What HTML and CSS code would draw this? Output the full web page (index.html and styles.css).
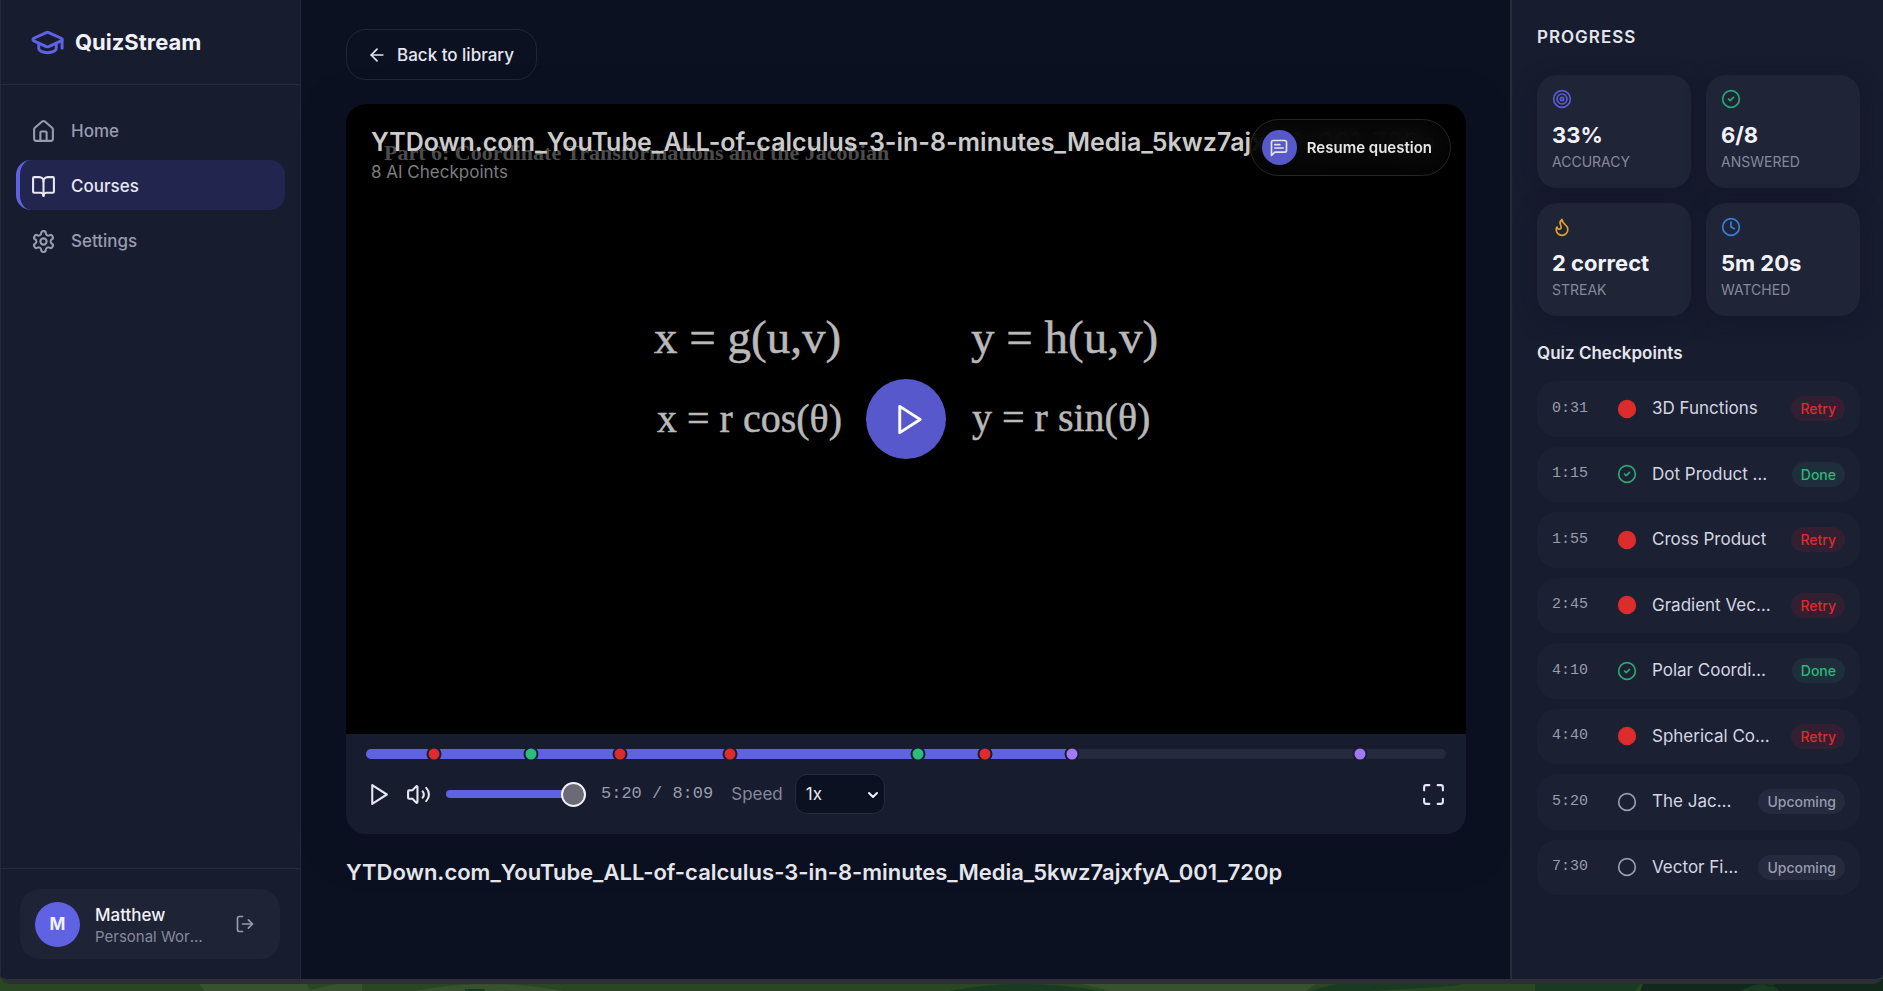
FILE: index.html
```html
<!DOCTYPE html>
<html lang="en">
<head>
  <meta charset="UTF-8">
  <meta name="viewport" content="width=device-width, initial-scale=1.0">
  <title>QuizStream</title>
  <link rel="stylesheet" href="styles.css">
</head>
<body>

  <div class="app">

    <!-- Sidebar -->
    <aside class="sidebar">
      <div class="brand">
        <svg class="icon icon-logo" viewBox="0 0 24 24"><path d="M21.42 10.922a1 1 0 0 0-.019-1.838L12.83 5.18a2 2 0 0 0-1.66 0L2.6 9.08a1 1 0 0 0 0 1.832l8.57 3.908a2 2 0 0 0 1.66 0z"/><path d="M22 10v6"/><path d="M6 12.5V16a6 3 0 0 0 12 0v-3.5"/></svg>
        <span class="brand-name">QuizStream</span>
      </div>

      <nav class="nav">
        <a class="nav-item" href="#home">
          <svg class="icon icon-nav" viewBox="0 0 24 24"><path d="M15 21v-8a1 1 0 0 0-1-1h-4a1 1 0 0 0-1 1v8"/><path d="M3 10a2 2 0 0 1 .709-1.528l7-5.999a2 2 0 0 1 2.582 0l7 5.999A2 2 0 0 1 21 10v9a2 2 0 0 1-2 2H5a2 2 0 0 1-2-2z"/></svg>
          Home
        </a>
        <a class="nav-item active" href="#courses">
          <svg class="icon icon-nav" viewBox="0 0 24 24"><path d="M12 7v14"/><path d="M3 18a1 1 0 0 1-1-1V4a1 1 0 0 1 1-1h5a4 4 0 0 1 4 4 4 4 0 0 1 4-4h5a1 1 0 0 1 1 1v13a1 1 0 0 1-1 1h-6a3 3 0 0 0-3 3 3 3 0 0 0-3-3z"/></svg>
          Courses
        </a>
        <a class="nav-item" href="#settings">
          <svg class="icon icon-nav" viewBox="0 0 24 24"><path d="M12.22 2h-.44a2 2 0 0 0-2 2v.18a2 2 0 0 1-1 1.73l-.43.25a2 2 0 0 1-2 0l-.15-.08a2 2 0 0 0-2.73.73l-.22.38a2 2 0 0 0 .73 2.73l.15.1a2 2 0 0 1 1 1.72v.51a2 2 0 0 1-1 1.74l-.15.09a2 2 0 0 0-.73 2.73l.22.38a2 2 0 0 0 2.73.73l.15-.08a2 2 0 0 1 2 0l.43.25a2 2 0 0 1 1 1.73V20a2 2 0 0 0 2 2h.44a2 2 0 0 0 2-2v-.18a2 2 0 0 1 1-1.73l.43-.25a2 2 0 0 1 2 0l.15.08a2 2 0 0 0 2.73-.73l.22-.39a2 2 0 0 0-.73-2.73l-.15-.08a2 2 0 0 1-1-1.74v-.5a2 2 0 0 1 1-1.74l.15-.09a2 2 0 0 0 .73-2.73l-.22-.38a2 2 0 0 0-2.73-.73l-.15.08a2 2 0 0 1-2 0l-.43-.25a2 2 0 0 1-1-1.73V4a2 2 0 0 0-2-2z"/><circle cx="12" cy="12" r="3"/></svg>
          Settings
        </a>
      </nav>

      <div class="sidebar-footer">
        <div class="user-card">
          <div class="avatar">M</div>
          <div class="user-info">
            <div class="user-name">Matthew</div>
            <div class="user-space">Personal Workspace</div>
          </div>
          <button class="icon-btn logout" type="button" aria-label="Log out">
            <svg class="icon icon-sm" viewBox="0 0 24 24"><path d="M9 21H5a2 2 0 0 1-2-2V5a2 2 0 0 1 2-2h4"/><path d="m16 17 5-5-5-5"/><path d="M21 12H9"/></svg>
          </button>
        </div>
      </div>
    </aside>

    <!-- Lesson -->
    <main class="main">
      <a class="back-btn" href="#library">
        <svg class="icon icon-sm" viewBox="0 0 24 24"><path d="m12 19-7-7 7-7"/><path d="M19 12H5"/></svg>
        Back to library
      </a>

      <section class="player">
        <div class="video">
          <svg class="frame" viewBox="0 0 1120 630">
            <text class="frame-heading" x="38" y="56">Part 6: Coordinate Transformations and the Jacobian</text>
            <text class="frame-big" x="308" y="249">x = g(u,v)</text>
            <text class="frame-big" x="625" y="249">y = h(u,v)</text>
            <text class="frame-small" x="311" y="328">x = r cos(θ)</text>
            <text class="frame-small" x="626" y="327">y = r sin(θ)</text>
          </svg>
          <div class="video-info">
            <div class="video-title">YTDown.com_YouTube_ALL-of-calculus-3-in-8-minutes_Media_5kwz7ajxfyA_001_720p</div>
            <div class="video-sub">8 AI Checkpoints</div>
          </div>
          <button class="resume-btn" type="button">
            <span class="resume-icon">
              <svg class="icon icon-sm" viewBox="0 0 24 24"><path d="M21 15a2 2 0 0 1-2 2H7l-4 4V5a2 2 0 0 1 2-2h14a2 2 0 0 1 2 2z"/><path d="M13 8H7"/><path d="M17 12H7"/></svg>
            </span>
            Resume question
          </button>
          <button class="big-play" type="button" aria-label="Play video">
            <svg class="icon icon-big" viewBox="0 0 24 24"><path d="M6 3l14 9-14 9z"/></svg>
          </button>
        </div>

        <div class="controls">
          <div class="timeline">
            <div class="timeline-fill" style="width: 65.4%"></div>
            <span class="marker retry" style="left: 6.3%"></span>
            <span class="marker done" style="left: 15.3%"></span>
            <span class="marker retry" style="left: 23.5%"></span>
            <span class="marker retry" style="left: 33.7%"></span>
            <span class="marker done" style="left: 51.1%"></span>
            <span class="marker retry" style="left: 57.3%"></span>
            <span class="marker upcoming" style="left: 65.4%"></span>
            <span class="marker upcoming" style="left: 92%"></span>
          </div>
          <div class="control-row">
            <button class="icon-btn" type="button" aria-label="Play">
              <svg class="icon icon-nav" viewBox="0 0 24 24"><path d="M6 3l14 9-14 9z"/></svg>
            </button>
            <button class="icon-btn" type="button" aria-label="Mute">
              <svg class="icon icon-nav" viewBox="0 0 24 24"><path d="M11 4.702a.705.705 0 0 0-1.203-.498L6.413 7.587A1.4 1.4 0 0 1 5.416 8H3a1 1 0 0 0-1 1v6a1 1 0 0 0 1 1h2.416a1.4 1.4 0 0 1 .997.413l3.383 3.384A.705.705 0 0 0 11 19.298z"/><path d="M16 9a5 5 0 0 1 0 6"/><path d="M19.364 18.364a9 9 0 0 0 0-12.728"/></svg>
            </button>
            <input class="volume" type="range" min="0" max="100" value="100" aria-label="Volume">
            <span class="time">5:20 / 8:09</span>
            <label class="speed-label" for="speed">Speed</label>
            <div class="speed-wrap">
              <select class="speed" id="speed">
                <option>0.5x</option>
                <option selected>1x</option>
                <option>1.5x</option>
                <option>2x</option>
              </select>
              <svg class="icon chevron" viewBox="0 0 24 24"><path d="m4 8 8 8 8-8"/></svg>
            </div>
            <button class="icon-btn fullscreen" type="button" aria-label="Fullscreen">
              <svg class="icon icon-nav" viewBox="0 0 24 24"><path d="M8 3H5a2 2 0 0 0-2 2v3"/><path d="M21 8V5a2 2 0 0 0-2-2h-3"/><path d="M3 16v3a2 2 0 0 0 2 2h3"/><path d="M16 21h3a2 2 0 0 0 2-2v-3"/></svg>
            </button>
          </div>
        </div>
      </section>

      <h1 class="lesson-title">YTDown.com_YouTube_ALL-of-calculus-3-in-8-minutes_Media_5kwz7ajxfyA_001_720p</h1>
    </main>

    <!-- Progress -->
    <aside class="progress">
      <h2 class="progress-title">PROGRESS</h2>
      <div class="stats">
        <div class="stat">
          <svg class="icon icon-sm accent" viewBox="0 0 24 24"><circle cx="12" cy="12" r="10"/><circle cx="12" cy="12" r="6"/><circle cx="12" cy="12" r="2"/></svg>
          <div class="stat-value">33%</div>
          <div class="stat-label">ACCURACY</div>
        </div>
        <div class="stat">
          <svg class="icon icon-sm green" viewBox="0 0 24 24"><circle cx="12" cy="12" r="10"/><path d="m9 12 2 2 4-4"/></svg>
          <div class="stat-value">6/8</div>
          <div class="stat-label">ANSWERED</div>
        </div>
        <div class="stat">
          <svg class="icon icon-sm amber" viewBox="0 0 24 24"><path d="M8.5 14.5A2.5 2.5 0 0 0 11 12c0-1.38-.5-2-1-3-1.072-2.143-.224-4.054 2-6 .5 2.5 2 4.9 4 6.5 2 1.6 3 3.5 3 5.5a7 7 0 1 1-14 0c0-1.153.433-2.294 1-3a2.5 2.5 0 0 0 2.5 2.5z"/></svg>
          <div class="stat-value">2 correct</div>
          <div class="stat-label">STREAK</div>
        </div>
        <div class="stat">
          <svg class="icon icon-sm blue" viewBox="0 0 24 24"><circle cx="12" cy="12" r="10"/><path d="M12 6v6l4 2"/></svg>
          <div class="stat-value">5m 20s</div>
          <div class="stat-label">WATCHED</div>
        </div>
      </div>

      <h3 class="list-title">Quiz Checkpoints</h3>
      <ul class="checkpoints">
        <li class="checkpoint">
          <span class="cp-time">0:31</span>
          <svg class="icon icon-sm red" viewBox="0 0 24 24"><circle cx="12" cy="12" r="10"/></svg>
          <span class="cp-name">3D Functions</span>
          <span class="badge retry">Retry</span>
        </li>
        <li class="checkpoint">
          <span class="cp-time">1:15</span>
          <svg class="icon icon-sm green" viewBox="0 0 24 24"><circle cx="12" cy="12" r="10"/><path d="m9 12 2 2 4-4"/></svg>
          <span class="cp-name">Dot Product and Angles</span>
          <span class="badge done">Done</span>
        </li>
        <li class="checkpoint">
          <span class="cp-time">1:55</span>
          <svg class="icon icon-sm red" viewBox="0 0 24 24"><circle cx="12" cy="12" r="10"/></svg>
          <span class="cp-name">Cross Product</span>
          <span class="badge retry">Retry</span>
        </li>
        <li class="checkpoint">
          <span class="cp-time">2:45</span>
          <svg class="icon icon-sm red" viewBox="0 0 24 24"><circle cx="12" cy="12" r="10"/></svg>
          <span class="cp-name">Gradient Vectors</span>
          <span class="badge retry">Retry</span>
        </li>
        <li class="checkpoint">
          <span class="cp-time">4:10</span>
          <svg class="icon icon-sm green" viewBox="0 0 24 24"><circle cx="12" cy="12" r="10"/><path d="m9 12 2 2 4-4"/></svg>
          <span class="cp-name">Polar Coordinates</span>
          <span class="badge done">Done</span>
        </li>
        <li class="checkpoint">
          <span class="cp-time">4:40</span>
          <svg class="icon icon-sm red" viewBox="0 0 24 24"><circle cx="12" cy="12" r="10"/></svg>
          <span class="cp-name">Spherical Coordinates</span>
          <span class="badge retry">Retry</span>
        </li>
        <li class="checkpoint">
          <span class="cp-time">5:20</span>
          <svg class="icon icon-sm" viewBox="0 0 24 24"><circle cx="12" cy="12" r="10"/></svg>
          <span class="cp-name">The Jacobian</span>
          <span class="badge upcoming">Upcoming</span>
        </li>
        <li class="checkpoint">
          <span class="cp-time">7:30</span>
          <svg class="icon icon-sm" viewBox="0 0 24 24"><circle cx="12" cy="12" r="10"/></svg>
          <span class="cp-name">Vector Fields</span>
          <span class="badge upcoming">Upcoming</span>
        </li>
      </ul>
    </aside>
  </div>

  <!-- camouflage strip under the window -->
  <svg class="backdrop" viewBox="0 0 1883 12" preserveAspectRatio="none">
    <rect width="1883" height="12" fill="#2b4623"/>
    <path fill="#38522f" d="M195 0h110l5 12h-105zM415 12q70-14 150 0zM360 0h2v12h-58z"/>
    <path fill="#1b3a22" d="M465 10h20v2h-20zM950 12q70-14 150 0zM1310 12q40-12 70-12h90l-10 6-20 2-70 4zM1535 0h110l-10 12h-100z"/>
    <path fill="#38522f" d="M1060 0h265l-20 12h-195z"/>
    <path fill="#12281b" d="M1645 0h238v12h-243z"/>
    <path fill="#1b3a22" d="M1740 12q25-14 40 0zM1785 0h-35l20 8z"/>
  </svg>

</body>
</html>
```

FILE: styles.css
```css
* {
  box-sizing: border-box;
}

body {
  display: flex;
  flex-direction: column;
  margin: 0;
  min-height: 100vh;
  background-color: #2b4623;
  font-family: Inter, "Liberation Sans", sans-serif;
  font-size: 17px;
  line-height: 1.5;
  color: #f1f2f8;
}

h1, h2, h3, ul {
  margin: 0;
  padding: 0;
}

button, select {
  font-family: inherit;
  cursor: pointer;
}

.app {
  position: relative;
  z-index: 1;
  display: flex;
  flex: 1;
  border-bottom: 5px solid #2c2f36;
  border-radius: 0 0 10px 10px;
  background-color: #0b1120;
  overflow: hidden;
}

.backdrop {
  display: block;
  width: 100%;
  height: 12px;
  margin-top: -5px;
}

/* icons */
.icon {
  display: block;
  flex-shrink: 0;
  fill: none;
  stroke: currentColor;
  stroke-width: 2;
  stroke-linecap: round;
  stroke-linejoin: round;
}

.icon-logo {
  width: 35px;
  height: 35px;
  color: #6062e4;
}

.icon-nav {
  width: 25px;
  height: 25px;
}

.icon-sm {
  width: 20px;
  height: 20px;
}

.icon-big {
  width: 35px;
  height: 35px;
}

.accent { color: #5a5cd6; }
.green { color: #2aa873; }
.amber { color: #e0a02e; }
.blue { color: #3b7fd9; }
.red { color: #dc2c2c; fill: currentColor; }

/* sidebar */
.sidebar {
  display: flex;
  flex-direction: column;
  flex-shrink: 0;
  width: 301px;
  background-color: #181c2f;
  border-left: 1px solid #262b3c;
  border-right: 1px solid #252a44;
}

.brand {
  display: flex;
  align-items: center;
  gap: 10px;
  height: 85px;
  padding-left: 29px;
  border-bottom: 1px solid #262b49;
}

.brand-name {
  font-size: 22px;
  font-weight: 700;
}

.nav {
  display: flex;
  flex: 1;
  flex-direction: column;
  gap: 5px;
  padding: 20px 15px;
}

.nav-item {
  display: flex;
  align-items: center;
  gap: 15px;
  height: 50px;
  padding: 2px 0 0 11px;
  border-left: 4px solid transparent;
  border-radius: 15px;
  color: #989cae;
  font-weight: 500;
  line-height: 27px;
  text-decoration: none;
}

.nav-item.active {
  background-color: #22264e;
  border-left-color: #6062e4;
  color: #e6e7f2;
}

.sidebar-footer {
  padding: 20px 20px 20px 19px;
  border-top: 1px solid #262b49;
}

.user-card {
  display: flex;
  align-items: center;
  gap: 15px;
  height: 70px;
  padding: 0 15px;
  border-radius: 20px;
  background-color: #1f2336;
}

.avatar {
  display: flex;
  align-items: center;
  justify-content: center;
  flex-shrink: 0;
  width: 45px;
  height: 45px;
  border-radius: 50%;
  background-color: #6062e4;
  font-weight: 700;
  line-height: 27px;
}

.user-info {
  flex: 1;
  min-width: 0;
  padding-top: 3px;
}

.user-name {
  font-weight: 500;
  line-height: 22px;
}

.user-space {
  overflow: hidden;
  color: #85899b;
  font-size: 15px;
  line-height: 22px;
  text-overflow: ellipsis;
  white-space: nowrap;
}

.icon-btn {
  display: flex;
  align-items: center;
  justify-content: center;
  width: 40px;
  height: 40px;
  padding: 0;
  border: none;
  background: none;
  color: #e6e7f2;
}

.logout {
  color: #989cae;
}

/* lesson */
.main {
  flex: 1;
  min-width: 0;
  padding: 29px 44px 29px 45px;
}

.back-btn {
  display: inline-flex;
  align-items: center;
  gap: 10px;
  height: 51px;
  padding: 1px 22px 0 20px;
  border: 1px solid #20253a;
  border-radius: 20px;
  color: #e6e7f2;
  font-weight: 500;
  line-height: 27px;
  text-decoration: none;
}

.player {
  margin-top: 24px;
  border-radius: 20px;
  background-color: #181c2f;
  box-shadow: 0 10px 40px rgba(16, 14, 40, 0.6);
  overflow: hidden;
}

.video {
  position: relative;
  aspect-ratio: 16 / 9;
  background-color: #000;
}

.frame {
  display: block;
  width: 100%;
  height: 100%;
  font-family: "Liberation Serif", serif;
}

.frame-heading {
  fill: #4c4c4c;
  font-size: 22px;
  font-weight: 700;
}

.frame-big,
.frame-small {
  fill: #b9b9b9;
  stroke: #b9b9b9;
  stroke-width: 0.5;
}

.frame-big {
  font-size: 47px;
}

.frame-small {
  font-size: 40px;
}

.video-info {
  position: absolute;
  top: 20px;
  left: 25px;
  right: 25px;
}

.video-title {
  overflow: hidden;
  color: #cbcbcb;
  font-size: 25px;
  font-weight: 600;
  line-height: 36px;
  white-space: nowrap;
}

.video-sub {
  color: #7d7d7d;
  line-height: 24px;
}

.resume-btn {
  position: absolute;
  top: 15px;
  right: 15px;
  display: flex;
  align-items: center;
  gap: 10px;
  height: 57px;
  padding: 0 18px 0 11px;
  border: 1px solid #262626;
  border-radius: 30px;
  background-color: rgba(5, 5, 5, 0.85);
  backdrop-filter: blur(12px);
  color: #e6e6e6;
  font-size: 15px;
  font-weight: 600;
}

.resume-icon {
  display: flex;
  align-items: center;
  justify-content: center;
  width: 35px;
  height: 35px;
  border-radius: 50%;
  background-color: #5658cc;
}

.big-play {
  position: absolute;
  top: 50%;
  left: 50%;
  display: flex;
  align-items: center;
  justify-content: center;
  width: 80px;
  height: 80px;
  padding: 0 0 0 5px;
  border: none;
  border-radius: 50%;
  background-color: #5658cc;
  color: #fff;
  transform: translate(-50%, -50%);
}

.controls {
  padding: 15px 20px 20px;
}

.timeline {
  position: relative;
  height: 10px;
  margin-bottom: 15px;
  border-radius: 5px;
  background-color: #262a3e;
}

.timeline-fill {
  height: 100%;
  border-radius: 5px;
  background-color: #6062e4;
}

.marker {
  position: absolute;
  top: 50%;
  width: 15px;
  height: 15px;
  border: 2px solid #181c2f;
  border-radius: 50%;
  transform: translate(-50%, -50%);
}

.marker.retry { background-color: #dc2c2c; }
.marker.done { background-color: #2cbc7c; }
.marker.upcoming { background-color: #a278f4; }

.control-row {
  display: flex;
  align-items: center;
  height: 40px;
}

.control-row .icon-btn {
  width: 25px;
  margin-right: 15px;
}

.volume {
  width: 140px;
  height: 25px;
  margin: 0 15px 0 0;
  appearance: none;
  background: none;
}

.volume::-webkit-slider-runnable-track {
  height: 8px;
  border-radius: 4px;
  background-color: #6062e4;
}

.volume::-webkit-slider-thumb {
  width: 25px;
  height: 25px;
  margin-top: -8px;
  appearance: none;
  border: 2px solid #f1f2f8;
  border-radius: 50%;
  background-color: #6b6b78;
}

.time {
  margin-right: 18px;
  color: #989cae;
  font-family: "Liberation Mono", monospace;
}

.speed-label {
  margin-right: 12px;
  color: #85899b;
  line-height: 27px;
}

.speed-wrap {
  position: relative;
}

.speed {
  display: block;
  width: 90px;
  height: 40px;
  padding: 0 10px;
  appearance: none;
  border: 1px solid #262b3f;
  border-radius: 12px;
  background-color: #0b1120;
  color: #e6e7f2;
  font-size: 17px;
}

.chevron {
  position: absolute;
  top: 15px;
  right: 6px;
  width: 12px;
  height: 12px;
  stroke-width: 4;
  pointer-events: none;
}

.control-row .fullscreen {
  margin: 0 0 0 auto;
}

.lesson-title {
  margin-top: 20px;
  color: #e4e6ec;
  font-size: 22px;
  font-weight: 600;
  line-height: 36px;
}

/* progress */
.progress {
  flex-shrink: 0;
  width: 373px;
  padding: 24px 23px 24px 25px;
  border-left: 2px solid #252a3c;
  background-color: #181c2f;
}

.progress-title {
  color: #e4e6ec;
  font-size: 17px;
  font-weight: 600;
  letter-spacing: 1px;
  line-height: 27px;
}

.stats {
  display: grid;
  grid-template-columns: 1fr 1fr;
  gap: 15px;
  margin-top: 24px;
}

.stat {
  height: 113px;
  padding: 14px 15px;
  border-radius: 20px;
  background-color: #202437;
  box-shadow: 0 5px 20px rgba(20, 18, 40, 0.5);
}

.stat-value {
  margin-top: 9px;
  font-size: 22px;
  font-weight: 700;
  line-height: 34px;
}

.stat-label {
  color: #85899b;
  font-size: 14px;
  line-height: 20px;
}

.list-title {
  margin: 24px 0 14px;
  color: #e4e6ec;
  font-size: 17px;
  font-weight: 600;
  line-height: 27px;
}

.checkpoints {
  display: flex;
  flex-direction: column;
  gap: 10px;
  list-style: none;
}

.checkpoint {
  display: flex;
  align-items: center;
  gap: 15px;
  padding: 15px;
  border-radius: 20px;
  background-color: #1c2033;
  color: #989cae;
}

.cp-time {
  width: 50px;
  font-family: "Liberation Mono", monospace;
  font-size: 15px;
}

.cp-name {
  flex: 1;
  min-width: 0;
  overflow: hidden;
  color: #d4d6e0;
  text-overflow: ellipsis;
  white-space: nowrap;
}

.badge {
  margin-left: 3px;
  padding: 0 9px;
  border-radius: 13px;
  background-color: #262a3e;
  font-size: 14px;
  font-weight: 500;
  line-height: 25px;
}

.badge.retry {
  background-color: #321f32;
  color: #dc2c2c;
}

.badge.done {
  background-color: #1e2f3b;
  color: #2cb878;
}
```
